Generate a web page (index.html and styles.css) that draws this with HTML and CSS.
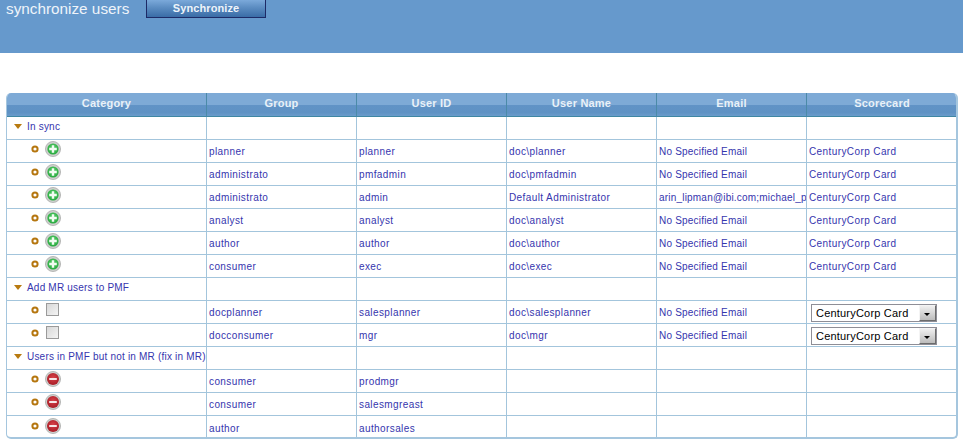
FILE: index.html
```html
<!DOCTYPE html>
<html lang="en">
<head>
<meta charset="utf-8">
<title>synchronize users</title>
<link rel="stylesheet" href="styles.css">
</head>
<body>
<svg class="defs" width="0" height="0" aria-hidden="true">
  <defs>
    <radialGradient id="gr" cx="50%" cy="40%" r="60%"><stop offset="0" stop-color="#5fd070"/><stop offset="1" stop-color="#25a83c"/></radialGradient>
    <radialGradient id="rd" cx="50%" cy="40%" r="60%"><stop offset="0" stop-color="#d8434a"/><stop offset="1" stop-color="#a81c26"/></radialGradient>
    <symbol id="plus" viewBox="0 0 16 16"><circle cx="8" cy="8" r="7.6" fill="#cdcfcd" stroke="#9a9c9a" stroke-width=".6"/><circle cx="8" cy="8" r="5.6" fill="url(#gr)"/><path d="M8 4.2v7.6M4.2 8h7.6" stroke="#f2fcf2" stroke-width="2.4"/></symbol>
    <symbol id="minus" viewBox="0 0 16 16"><circle cx="8" cy="8" r="7.6" fill="#cdcfcd" stroke="#9a9c9a" stroke-width=".6"/><circle cx="8" cy="8" r="6" fill="url(#rd)"/><path d="M4.2 8h7.6" stroke="#f6e6e6" stroke-width="2.2"/></symbol>
    <symbol id="tri" viewBox="0 0 8 5"><path d="M0 0h8L4 5z" fill="#b87a10"/></symbol>
    <symbol id="dot" viewBox="0 0 8 8"><circle cx="4" cy="4" r="2.6" fill="#fff" stroke="#b5760f" stroke-width="2"/></symbol>
  </defs>
</svg>
<header class="topbar">
  <h1 class="title">synchronize users</h1>
  <button class="sync" type="button">Synchronize</button>
</header>
<main class="panel">
<table class="grid">
  <thead>
    <tr><th>Category</th><th>Group</th><th>User ID</th><th>User Name</th><th>Email</th><th>Scorecard</th></tr>
  </thead>
  <tbody>
    <tr class="sec"><td><span class="sec-l"><svg class="tri"><use href="#tri"/></svg>In sync</span></td><td></td><td></td><td></td><td></td><td></td></tr>
    <tr><td><span class="ind"><svg class="dot"><use href="#dot"/></svg><svg class="ico"><use href="#plus"/></svg></span></td><td>planner</td><td>planner</td><td>doc\planner</td><td>No Specified Email</td><td>CenturyCorp Card</td></tr>
    <tr><td><span class="ind"><svg class="dot"><use href="#dot"/></svg><svg class="ico"><use href="#plus"/></svg></span></td><td>administrato</td><td>pmfadmin</td><td>doc\pmfadmin</td><td>No Specified Email</td><td>CenturyCorp Card</td></tr>
    <tr><td><span class="ind"><svg class="dot"><use href="#dot"/></svg><svg class="ico"><use href="#plus"/></svg></span></td><td>administrato</td><td>admin</td><td>Default Administrator</td><td>arin_lipman@ibi.com;michael_p</td><td>CenturyCorp Card</td></tr>
    <tr><td><span class="ind"><svg class="dot"><use href="#dot"/></svg><svg class="ico"><use href="#plus"/></svg></span></td><td>analyst</td><td>analyst</td><td>doc\analyst</td><td>No Specified Email</td><td>CenturyCorp Card</td></tr>
    <tr><td><span class="ind"><svg class="dot"><use href="#dot"/></svg><svg class="ico"><use href="#plus"/></svg></span></td><td>author</td><td>author</td><td>doc\author</td><td>No Specified Email</td><td>CenturyCorp Card</td></tr>
    <tr><td><span class="ind"><svg class="dot"><use href="#dot"/></svg><svg class="ico"><use href="#plus"/></svg></span></td><td>consumer</td><td>exec</td><td>doc\exec</td><td>No Specified Email</td><td>CenturyCorp Card</td></tr>
    <tr class="sec"><td><span class="sec-l"><svg class="tri"><use href="#tri"/></svg>Add MR users to PMF</span></td><td></td><td></td><td></td><td></td><td></td></tr>
    <tr><td><span class="ind"><svg class="dot"><use href="#dot"/></svg><span class="chk"></span></span></td><td>docplanner</td><td>salesplanner</td><td>doc\salesplanner</td><td>No Specified Email</td><td class="selcell"><span class="sel"><span class="sel-t">CenturyCorp Card</span><span class="sel-b"></span></span></td></tr>
    <tr><td><span class="ind"><svg class="dot"><use href="#dot"/></svg><span class="chk"></span></span></td><td>docconsumer</td><td>mgr</td><td>doc\mgr</td><td>No Specified Email</td><td class="selcell"><span class="sel"><span class="sel-t">CenturyCorp Card</span><span class="sel-b"></span></span></td></tr>
    <tr class="sec"><td><span class="sec-l"><svg class="tri"><use href="#tri"/></svg>Users in PMF but not in MR (fix in MR)</span></td><td></td><td></td><td></td><td></td><td></td></tr>
    <tr><td><span class="ind"><svg class="dot"><use href="#dot"/></svg><svg class="ico"><use href="#minus"/></svg></span></td><td>consumer</td><td>prodmgr</td><td></td><td></td><td></td></tr>
    <tr><td><span class="ind"><svg class="dot"><use href="#dot"/></svg><svg class="ico"><use href="#minus"/></svg></span></td><td>consumer</td><td>salesmgreast</td><td></td><td></td><td></td></tr>
    <tr><td><span class="ind"><svg class="dot"><use href="#dot"/></svg><svg class="ico"><use href="#minus"/></svg></span></td><td>author</td><td>authorsales</td><td></td><td></td><td></td></tr>
  </tbody>
</table>
</main>
</body>
</html>
```
FILE: styles.css
```css
html, body { margin: 0; padding: 0; background: #fff; overflow: hidden; }
body { width: 963px; height: 445px; font-family: "Liberation Sans", Arial, sans-serif; }
.defs { display: block; height: 0; }

.topbar {
  height: 53px;
  background: #6699cc;
  display: flex;
  align-items: flex-start;
  padding-left: 6px;
  box-sizing: border-box;
}
.title {
  margin: 0;
  font-size: 15.3px;
  font-weight: normal;
  line-height: 18px;
  color: #eef4fa;
  width: 140px;
}
.sync {
  width: 120px;
  height: 18px;
  margin: 0;
  padding: 0 0 1px;
  box-sizing: border-box;
  border: 1px solid #1d2a66;
  border-top: 0;
  background: linear-gradient(#7ba9da 0%, #5b8cc1 45%, #3a6ca6 100%);
  color: #eef4fa;
  font: bold 11px "Liberation Sans", Arial, sans-serif;
  letter-spacing: .1px;
}

.panel {
  margin: 40px 0 0 6px;
  width: 952px;
  border-radius: 5px;
  overflow: hidden;
  border: solid #a5c6de;
  border-width: 0 2px 2px 1px;
  box-sizing: border-box;
  height: 346px;
}
.grid {
  border-collapse: separate;
  border-spacing: 0;
  table-layout: fixed;
  width: 950px;
  font-size: 10px;
}
.grid th {
  height: 24px;
  padding: 0 0 4px;
  width: 150px;
  box-sizing: border-box;
  border-right: 1px solid #4b8aa8;
  border-bottom: 1px solid #3f87a3;
  background: linear-gradient(#7eaad6 0%, #7eaad6 50%, #6193c6 54%, #5f92c4 85%, #6a9ccb 100%);
  color: #e9f1f8;
  font-size: 11px;
  font-weight: bold;
  text-align: center;
  letter-spacing: .2px;
}
.grid th:first-child { width: 200px; }
.grid th:last-child { border-right: 0; }
.grid td {
  height: 23px;
  padding: 1px 0 0 2px;
  box-sizing: border-box;
  border-right: 1px solid #a3c5dc;
  border-bottom: 1px solid #a3c5dc;
  color: #3535ae;
  white-space: nowrap;
  overflow: hidden;
  font-size: 10px;
  letter-spacing: .4px;
  vertical-align: middle;
}
.grid td:nth-child(5) { letter-spacing: .2px; }
.grid tr.sec td { padding-top: 0; }
.grid tr td:last-child { border-right: 0; }
.grid tbody tr:last-child td { border-bottom: 0; }

.sec-l { display: flex; align-items: center; padding-left: 5px; margin-top: -3px; letter-spacing: .2px; }
.tri { width: 8px; height: 5px; margin-right: 5px; flex: none; }
.ind { display: flex; align-items: center; padding-left: 22px; margin-top: -5px; }
.dot { width: 8px; height: 8px; margin-right: 6px; flex: none; }
.ico { width: 16px; height: 16px; flex: none; }
.chk {
  width: 11px; height: 11px; flex: none;
  border: 1px solid #9a9a9a;
  background: linear-gradient(135deg, #d8d8d8, #f4f4f4);
  margin-left: 1px;
  margin-top: -1px;
}

.selcell { padding-left: 4px !important; }
.sel {
  display: flex;
  width: 126px;
  height: 18px;
  box-sizing: border-box;
  border: 1px solid #8e8e96;
  background: #fff;
  align-items: center;
  justify-content: space-between;
}
.sel-t { color: #000; font-size: 11px; padding-left: 4px; letter-spacing: .2px; }
.sel-b {
  position: relative;
  width: 17px; height: 16px;
  background: linear-gradient(#efefef, #bcbcbc);
  border: 1px solid; border-color: #f4f4f4 #6c6c6c #6c6c6c #f4f4f4;
  box-sizing: border-box;
}
.sel-b::after {
  content: "";
  position: absolute;
  left: 4px; top: 7px;
  border: 3.5px solid transparent;
  border-top: 3.5px solid #000;
  border-bottom: 0;
}
```
